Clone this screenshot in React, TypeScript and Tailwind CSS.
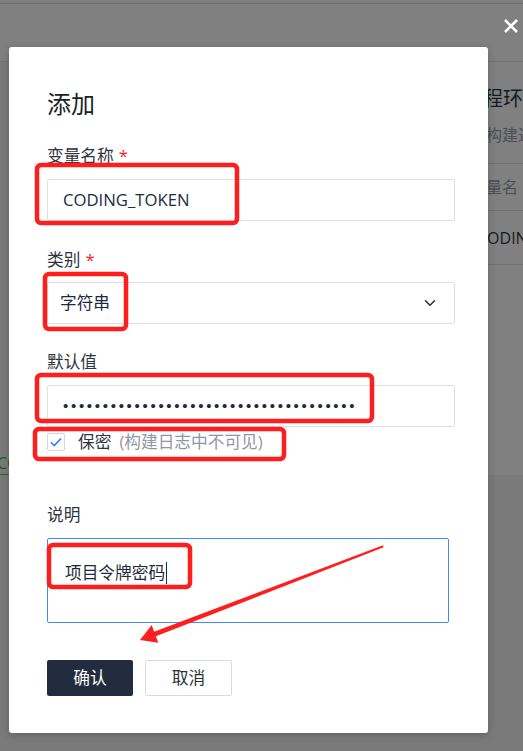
import { ChevronDown } from "lucide-react";

const font = "font-['Open_Sans','Noto_Sans_CJK_SC',sans-serif]";

function Field({ label, required, children, className }: { label: string; required?: boolean; children: React.ReactNode; className?: string }) {
  return (
    <div className={className}>
      <div className="text-[16.7px] leading-[22px] text-[#2f3540]">
        {label}
        {required && <span className="ml-[5px] text-[#f5222d]">*</span>}
      </div>
      {children}
    </div>
  );
}

function Annotations() {
  // red marks drawn over the screenshot
  return (
    <svg className="pointer-events-none absolute left-0 top-0" width="523" height="751" viewBox="0 0 523 751">
      <g fill="none" stroke="#ff1e1e" strokeWidth="4.5">
        <rect x="37" y="165" width="200" height="58" rx="4" />
        <rect x="45" y="274" width="81" height="55" rx="4" />
        <rect x="37" y="375" width="335" height="46" rx="4" />
        <rect x="35" y="429" width="249" height="30" rx="4" />
        <rect x="49" y="545" width="141" height="42" rx="4" />
      </g>
      <polygon
        fill="#ff1e1e"
        points="383,545.3 154.1,631.7 151.7,625 140,640 158.3,642.7 155.9,636.3 383.6,547.2"
      />
    </svg>
  );
}

export default function App() {
  return (
    <div className={`relative h-[751px] w-[523px] overflow-hidden bg-[#7a7a7b] ${font}`}>
      {/* page behind the overlay */}
      <div className="h-[4px] border-b border-[#6d6d6d] bg-[#7e7e7e]" />
      <div className="h-[58px] border-b border-[#747474] bg-[#808080]" />
      <div className="flex">
        <div className="flex-1 pt-[389px]">
          <span className="ml-[-3px] border-b border-[#1f6b1f] text-[16px] leading-[21px] text-[#1a5c1a]">CODING</span>
        </div>
        <div className="w-[96px] bg-[#808080] pb-[24px]">
          <div className="whitespace-nowrap pl-[36px] pt-[23px] text-[20px] leading-[28px] text-[#161b22]">流程环境变量</div>
          <div className="mt-[11px] whitespace-nowrap pl-[43px] text-[16px] leading-[22px] text-[#4b4f55]">在构建过程中使用</div>
          <div className="mt-[17px] flex h-[48px] items-center whitespace-nowrap border-y border-[#737373] pl-[43px] text-[16px] text-[#4b4f55]">
            变量名
          </div>
          <div className="flex h-[54px] items-center whitespace-nowrap border-b border-[#737373] pl-[50px] text-[16px] text-[#161b22]">
            CODING_TOKEN
          </div>
        </div>
      </div>

      {/* modal */}
      <div className="absolute left-[9px] top-[47px] w-[479px] rounded-[3px] bg-white pb-[37px] pl-[38px] pt-[41px] shadow-[0_2px_8px_rgba(0,0,0,0.2)]">
        <div className="text-[24px] leading-[32px] text-[#1b1f26]">添加</div>

        <Field label="变量名称" required className="mt-[25px]">
          <div className="mt-[12px] flex h-[42px] w-[408px] items-center rounded-[2px] border border-[#dcdfe5] pl-[15px] text-[16.7px] text-[#1d2b3d]">
            CODING_TOKEN
          </div>
        </Field>

        <Field label="类别" required className="mt-[28px]">
          <div className="mt-[11px] flex h-[42px] w-[408px] items-center justify-between rounded-[2px] border border-[#dcdfe5] pl-[12px] pr-[15px] text-[16.7px] text-[#1d2b3d]">
            <span>字符串</span>
            <ChevronDown size={18} strokeWidth={2} className="text-[#2a2f36]" />
          </div>
        </Field>

        <Field label="默认值" className="mt-[27px]">
          <div className="mt-[12px] flex h-[42px] w-[408px] items-center rounded-[2px] border border-[#dcdfe5] pl-[15px] font-['Liberation_Sans',sans-serif] text-[15px] tracking-[2.7px] text-[#1d2b3d]">
            {"•".repeat(37)}
          </div>
        </Field>

        <div className="mt-[6px] flex h-[18px] items-center text-[16.7px]">
          <span className="flex h-[18px] w-[18px] items-center justify-center rounded-[2px] border border-[#d3d7de]">
            <svg width="12" height="10" viewBox="0 0 12 10" fill="none">
              <path d="M1 5.2 L4.3 8.5 L11 1.5" stroke="#2f7cf6" strokeWidth="1.6" />
            </svg>
          </span>
          <span className="ml-[13px] text-[#2f3540]">保密</span>
          <span className="ml-[8px] text-[#8f97a5]">(构建日志中不可见)</span>
        </div>

        <Field label="说明" className="mt-[53px]">
          <div className="mt-[12px] h-[85px] w-[402px] rounded-[2px] border border-[#3c8bf7] pl-[17px] pt-[18px] text-[16.7px] leading-[24px] text-[#1d2b3d]">
            项目令牌密码<span className="ml-[1px] inline-block h-[22px] w-[1px] translate-y-[5px] bg-[#1d2b3d] align-baseline" />
          </div>
        </Field>

        <div className="mt-[37px] flex gap-[12px] text-[16.7px]">
          <button className="h-[36px] w-[86px] rounded-[2px] bg-[#222c3e] text-white">确认</button>
          <button className="h-[36px] w-[87px] rounded-[2px] border border-[#d8dbe1] bg-white text-[#2a2f36]">取消</button>
        </div>
      </div>

      {/* close */}
      <svg className="absolute left-[504px] top-[19px]" width="14" height="14" viewBox="0 0 14 14">
        <path d="M1 1 L13 13 M13 1 L1 13" stroke="white" strokeWidth="2.6" />
      </svg>

      <Annotations />
    </div>
  );
}
